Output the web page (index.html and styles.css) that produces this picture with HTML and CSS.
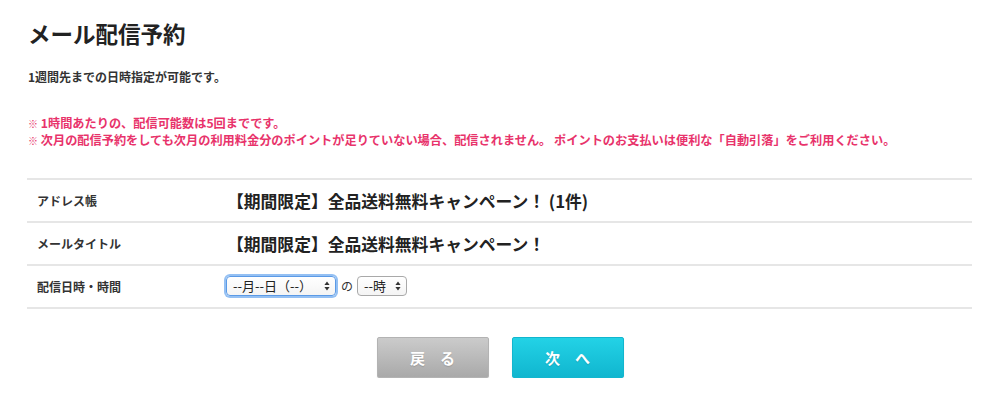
FILE: index.html
```html
<!DOCTYPE html>
<html lang="ja">
<head>
<meta charset="utf-8">
<title>メール配信予約</title>
<link rel="stylesheet" href="styles.css">
</head>
<body>
<div class="page">
  <h1 class="title">メール配信予約</h1>
  <p class="lead">1週間先までの日時指定が可能です。</p>
  <div class="warnings">
    <p><span class="mark">※</span> 1時間あたりの、配信可能数は5回までです。</p>
    <p><span class="mark">※</span> 次月の配信予約をしても次月の利用料金分のポイントが足りていない場合、配信されません。 ポイントのお支払いは便利な「自動引落」をご利用ください。</p>
  </div>
  <div class="form">
    <div class="row">
      <div class="label">アドレス帳</div>
      <div class="value big">【期間限定】全品送料無料キャンペーン！ (1件)</div>
    </div>
    <div class="row">
      <div class="label">メールタイトル</div>
      <div class="value big">【期間限定】全品送料無料キャンペーン！</div>
    </div>
    <div class="row">
      <div class="label">配信日時・時間</div>
      <div class="value selects">
        <span class="sel sel-date focused">
          <select><option>--月--日（--）</option></select>
          <svg class="arrows" width="6" height="10" viewBox="0 0 6 10"><path d="M3 0.5L5.6 4H0.4Z M3 9.5L5.6 6H0.4Z" fill="#333"/></svg>
        </span>
        <span class="no">の</span>
        <span class="sel sel-hour">
          <select><option>--時</option></select>
          <svg class="arrows" width="6" height="10" viewBox="0 0 6 10"><path d="M3 0.5L5.6 4H0.4Z M3 9.5L5.6 6H0.4Z" fill="#333"/></svg>
        </span>
      </div>
    </div>
  </div>
  <div class="buttons">
    <button class="btn btn-back">戻　る</button>
    <button class="btn btn-next">次　へ</button>
  </div>
</div>
</body>
</html>
```
FILE: styles.css
```css
html, body {
  margin: 0;
  padding: 0;
  background: #fff;
}
body {
  font-family: "Noto Sans CJK JP", "Noto Sans", "Liberation Sans", sans-serif;
  color: #333;
}
.page {
  padding: 17px 28px 0 27px;
}
.title {
  margin: 0;
  font-size: 22.5px;
  line-height: 32px;
  font-weight: bold;
  color: #222;
  padding-left: 1px;
}
.lead {
  margin: 20px 0 0;
  font-size: 12px;
  line-height: 16px;
  font-weight: bold;
  color: #333;
  padding-left: 1px;
}
.warnings {
  margin-top: 30px;
  color: #e8336b;
  font-size: 12.2px;
  line-height: 17px;
  font-weight: bold;
  padding-left: 1px;
}
.warnings p {
  margin: 0;
}
.mark {
  font-size: 10px;
}
.form {
  margin-top: 29px;
  border-top: 2px solid #e6e6e6;
}
.row {
  display: grid;
  grid-template-columns: 199px 1fr;
  align-items: center;
  height: 41px;
  border-bottom: 2px solid #e6e6e6;
}
.label {
  padding-left: 10px;
  font-size: 12px;
  font-weight: bold;
  color: #333;
}
.value.big {
  font-size: 16.8px;
  font-weight: bold;
  color: #222;
  padding-left: 1px;
}
.selects {
  display: flex;
  align-items: center;
  gap: 3px;
  padding-bottom: 2px;
}
.sel {
  position: relative;
  display: flex;
  height: 20px;
}
.sel select {
  -webkit-appearance: none;
  appearance: none;
  box-sizing: border-box;
  height: 20px;
  margin: 0;
  border: 1px solid #a9a9a9;
  border-radius: 4px;
  background: linear-gradient(#ffffff, #f4f4f4);
  font-family: "Noto Sans CJK JP", sans-serif;
  font-size: 13px;
  line-height: 18px;
  color: #222;
  padding: 0 0 0 6px;
}
.sel-date select {
  width: 110px;
}
.sel-hour select {
  width: 50px;
}
.sel.focused select {
  border-color: #5b9ae6;
  box-shadow: 0 0 0 2px #94c0f3;
}
.arrows {
  position: absolute;
  right: 6px;
  top: 5px;
}
.no {
  font-size: 12px;
  color: #333;
  margin: 0 1px 0 2px;
}
.buttons {
  display: flex;
  justify-content: center;
  gap: 23px;
  margin-top: 28px;
  padding-left: 1px;
}
.btn {
  box-sizing: border-box;
  width: 112px;
  height: 41px;
  padding: 0;
  border-radius: 2px;
  font-family: "Noto Sans CJK JP", sans-serif;
  font-size: 15px;
  font-weight: bold;
  color: #fff;
  text-shadow: 0 1px 1px rgba(0, 0, 0, 0.15);
  cursor: pointer;
}
.btn-back {
  border: 1px solid #b3b3b3;
  background: linear-gradient(#cbcbcb, #a9a9a9);
  box-shadow: 0 1px 1px rgba(0, 0, 0, 0.15);
}
.btn-next {
  border: 1px solid #12b6ce;
  background: linear-gradient(#23d2e6, #10b6cf);
  box-shadow: 0 1px 1px rgba(0, 0, 0, 0.15);
}
```
